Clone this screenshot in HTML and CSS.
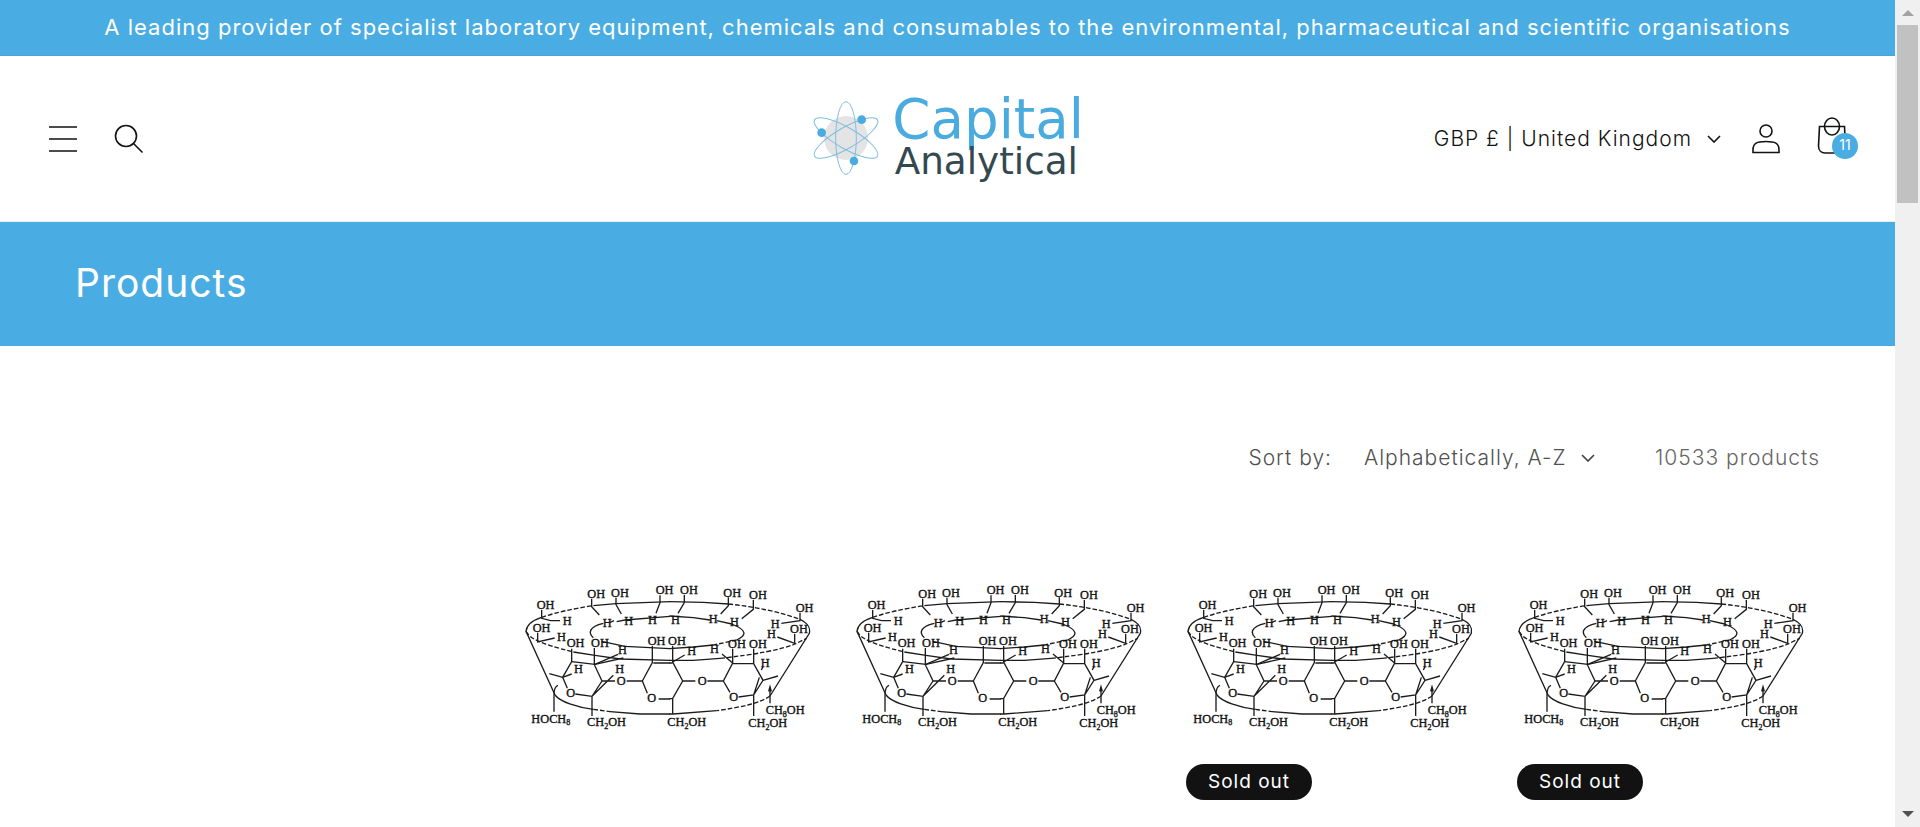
FILE: index.html
```html
<!DOCTYPE html>
<html lang="en">
<head>
<meta charset="utf-8">
<meta name="viewport" content="width=device-width, initial-scale=1">
<title>Products – Capital Analytical</title>
<link rel="stylesheet" href="styles.css">
</head>
<body>
<div class="window">
  <div class="page">
    <p class="announcement">A leading provider of specialist laboratory equipment, chemicals and consumables to the environmental, pharmaceutical and scientific organisations</p>

    <header class="header">
      <div class="header-start">
        <button class="icon-button" type="button" aria-label="Menu">
          <svg class="icon" viewBox="0 0 30 30"><path d="M1 3H29M1 15H29M1 27H29"/></svg>
        </button>
        <button class="icon-button" type="button" aria-label="Search">
          <svg class="icon" viewBox="0 0 30 30"><circle cx="12" cy="12" r="10.500"/><path d="M19.500 19.500L28.500 28.500"/></svg>
        </button>
      </div>

      <a class="logo" href="#" aria-label="Capital Analytical">
        <svg class="logo-art" viewBox="0 0 840 261">
          <circle cx="114" cy="129" r="66" fill="#e4e4e5"/>
          <g class="orbits">
            <ellipse cx="114" cy="129" rx="31" ry="109"/>
            <ellipse cx="114" cy="129" rx="31" ry="109" transform="rotate(60 114 129)"/>
            <ellipse cx="114" cy="129" rx="31" ry="109" transform="rotate(-60 114 129)"/>
          </g>
          <g fill="#4aabdf"><circle cx="41" cy="113" r="13"/><circle cx="161" cy="74" r="13"/><circle cx="138" cy="198" r="13"/></g>
          <text class="logo-name" x="253" y="128">Capital</text>
          <text class="logo-sub" x="260" y="236">Analytical</text>
        </svg>
      </a>

      <div class="header-end">
        <button class="currency" type="button">GBP £ | United Kingdom
          <svg class="chevron" viewBox="0 0 14 8"><path d="M1 1L7 7L13 1"/></svg>
        </button>
        <a class="icon-button" href="#" aria-label="Log in">
          <svg class="icon" viewBox="0 0 30 30"><circle cx="15" cy="7" r="6"/><path d="M2 28.500V26C2 19 6 17.500 15 17.500S28 19 28 26V28.500Z"/></svg>
        </a>
        <a class="icon-button cart" href="#" aria-label="Cart, 11 items">
          <svg class="icon cart-icon" viewBox="0 0 30 38"><path d="M2.500 10.500H27.500L28.500 30C28.500 34.500 25.500 37 22 37H8C4.500 37 1.500 34.500 1.500 30Z"/><ellipse cx="15" cy="10.500" rx="7.500" ry="8.500"/></svg>
          <span class="cart-count">11</span>
        </a>
      </div>
    </header>

    <div class="hero"><h1 class="hero-title">Products</h1></div>

    <main class="collection">
      <form class="toolbar">
        <label class="sort-label" for="sort">Sort by:</label>
        <span class="sort">
          <select class="sort-select" id="sort"><option>Alphabetically, A-Z</option></select>
          <svg class="chevron" viewBox="0 0 14 8"><path d="M1 1L7 7L13 1"/></svg>
        </span>
        <span class="count">10533 products</span>
      </form>

      <ul class="grid">
        <li class="card">
          <a class="card-link" href="#" aria-label="Cyclodextrin product 1">
          <svg class="molecule" viewBox="0 0 909 510">
            <defs>
            <g id="molecule">
              <g transform="translate(-42 0)">
                <g class="bonds">
                  <path d="M95 142C70 150 50 165 48 184L135 375M250 107L318 101L480 95M320 155L345 150L480 139M280 160C235 170 235 190 250 203M275 214L345 229L480 236M190 246L255 256L330 267L480 271M185 275L255 283L340 264M430 279H480"/>
                  <path d="M135 375C150 395 200 412 250 418M300 425L390 432H480"/>
                  <path class="dash" d="M95 142Q160 120 250 107M48 184C60 205 85 220 190 246M250 418L300 425"/>
                  <path d="M95 120V145L122 152H150M83 188V216L134 204M245 86V110L268 135M318 83V104L334 132M450 76V98L438 130M185 236V275L158 322L172 355M118 311L158 322L185 312M253 234V284L276 333L246 379L196 372M253 284L324 253M276 333H315M350 333H397L412 370M246 379L310 316M246 379V438M427 228V278L397 333M446 387H480M132 425V375Q132 350 144 346M300 157L312 152"/>
                </g>
                <g class="atoms">
                  <text x="80" y="117">OH</text><text x="158" y="166">H</text><text x="68" y="186">OH</text><text x="141" y="212">H</text>
                  <text x="170" y="232">OH</text><text x="232" y="83">OH</text><text x="303" y="80">OH</text><text x="278" y="171">H</text>
                  <text x="343" y="164">H</text><text x="414" y="161">H</text><text x="437" y="72">OH</text><text x="243" y="232">OH</text>
                  <text x="324" y="253">H</text><text x="192" y="310">H</text><text x="316" y="308">H</text><text x="320" y="344">O</text>
                  <text x="169" y="381">O</text><text x="413" y="224">OH</text><text x="412" y="397">O</text>
                  <text x="64" y="458">HOCH<tspan class="sub" dy="7">8</tspan></text>
                  <text x="231" y="468">CH<tspan class="sub" dy="9">2</tspan><tspan dy="-9">OH</tspan></text>
                </g>
              </g>
              <g transform="translate(408 0)">
                <g class="bonds">
                  <path d="M28 95L130 97L205 102M28 138L100 143L150 150M170 152L215 162C260 180 262 195 230 210M28 236L100 231L160 225M28 271L100 271L180 265M28 279H38M420 148C445 160 452 172 448 190L330 378M28 432H40L170 422"/>
                  <path class="dash" d="M205 102Q330 115 420 148M230 210L160 225M180 265Q340 248 405 222L440 205M330 378C300 400 240 412 170 422"/>
                  <path d="M73 75V98L54 130M205 82V107L182 132M280 90V118L245 146M420 128V152L364 160M404 192V220L352 201M38 228V276L68 333L38 385V432M38 276L74 255M68 333H106M142 333H190L218 279V236M190 333L210 367M218 279L186 252M218 281H281L309 331L281 375L236 381M281 236V281M309 331L354 318M281 375L298 322M281 375V438M304 300L309 290M330 400V350M326 364L330 350L334 364M28 386H38"/>
                </g>
                <g class="atoms">
                  <text x="60" y="72">OH</text><text x="190" y="80">OH</text><text x="267" y="87">OH</text><text x="407" y="125">OH</text>
                  <text x="33" y="161">H</text><text x="146" y="160">H</text><text x="210" y="169">H</text><text x="332" y="173">H</text>
                  <text x="321" y="205">H</text><text x="390" y="190">OH</text><text x="24" y="224">OH</text><text x="82" y="254">H</text>
                  <text x="150" y="250">H</text><text x="204" y="233">OH</text><text x="267" y="233">OH</text><text x="302" y="290">H</text>
                  <text x="113" y="344">O</text><text x="208" y="394">O</text>
                  <text x="22" y="468">CH<tspan class="sub" dy="9">2</tspan><tspan dy="-9">OH</tspan></text>
                  <text x="265" y="470">CH<tspan class="sub" dy="9">2</tspan><tspan dy="-9">OH</tspan></text>
                  <text x="317" y="433">CH<tspan class="sub" dy="7">8</tspan><tspan dy="-7">OH</tspan></text>
                </g>
              </g>
            </g>
            </defs>
            <use href="#molecule"/>
          </svg></a>
        </li>
        <li class="card">
          <a class="card-link" href="#" aria-label="Cyclodextrin product 2"><svg class="molecule" viewBox="0 0 909 510"><use href="#molecule"/></svg></a>
        </li>
        <li class="card">
          <a class="card-link" href="#" aria-label="Cyclodextrin product 3"><svg class="molecule" viewBox="0 0 909 510"><use href="#molecule"/></svg></a>
          <span class="badge">Sold out</span>
        </li>
        <li class="card">
          <a class="card-link" href="#" aria-label="Cyclodextrin product 4"><svg class="molecule" viewBox="0 0 909 510"><use href="#molecule"/></svg></a>
          <span class="badge">Sold out</span>
        </li>
      </ul>
    </main>
  </div>

  <div class="scrollbar" aria-hidden="true">
    <svg class="scroll-arrow" viewBox="0 0 12 6"><path d="M0 6L6 0L12 6Z" fill="#a3a3a3"/></svg>
    <div class="scroll-thumb"></div>
    <svg class="scroll-arrow scroll-down" viewBox="0 0 12 6"><path d="M0 0L6 6L12 0Z" fill="#505050"/></svg>
  </div>
</div>
</body>
</html>
```

FILE: styles.css
```css
* { box-sizing: border-box; }

body {
  margin: 0;
  background: #fff;
  color: #121212;
  font-family: Inter, "Open Sans", sans-serif;
  font-size: 21px;
  font-weight: 300;
  line-height: 30px;
  letter-spacing: 1px;
}

button, select { font: inherit; letter-spacing: inherit; color: inherit; background: none; border: 0; padding: 0; margin: 0; }
a { color: inherit; text-decoration: none; }
svg { display: block; }

.window { display: flex; height: 100vh; overflow: hidden; }
.page { flex: 1; min-width: 0; overflow: hidden; }

.announcement {
  margin: 0;
  padding: 12px 24px 13px;
  border-bottom: 1px solid #45a5d9;
  background: #49ade3;
  color: #fff;
  font-size: 22px;
  font-weight: 400;
  text-align: center;
}

.header {
  display: grid;
  grid-template-columns: 1fr auto 1fr;
  align-items: center;
  padding: 39px 35px;
  border-bottom: 1px solid #e8eef1;
}
.header-start { display: flex; gap: 10px; }
.header-end { display: flex; justify-content: flex-end; align-items: center; gap: 10px; }
.icon-button { display: grid; place-items: center; width: 56px; height: 56px; position: relative; }
.icon, .chevron { fill: none; stroke: #121212; stroke-width: 1.6; }
.icon { width: 30px; height: 30px; }
.cart-icon { height: 38px; margin-bottom: 8px; }
.cart-count {
  position: absolute;
  left: 28px;
  top: 22px;
  width: 26px;
  height: 26px;
  border-radius: 50%;
  background: #49ade3;
  color: #fff;
  font-size: 14px;
  font-weight: 400;
  line-height: 24px;
  text-align: center;
  letter-spacing: 0;
}
.currency { display: flex; align-items: center; gap: 15px; margin-right: 7px; }
.chevron { width: 14px; height: 8px; }

.logo-art { width: 280px; height: 87px; overflow: visible; }
.orbits { fill: none; stroke: #7fbfe0; stroke-width: 3; }
.logo-name { font: 400 164px "DejaVu Sans", sans-serif; letter-spacing: 0; fill: #4aabdf; }
.logo-sub { font: 400 112px "DejaVu Sans", sans-serif; letter-spacing: 0; fill: #34494f; }

.hero { padding: 36px 75px 38px; background: #49ade3; color: #fff; }
.hero-title { margin: 0; font-size: 39px; font-weight: 400; line-height: 50px; }

.collection { padding: 97px 75px 0; }
.toolbar { display: flex; justify-content: flex-end; align-items: center; color: #505050; }
.sort-label { margin-right: 32px; }
.sort { display: flex; align-items: center; gap: 14px; margin-right: 60px; }
.sort-select { appearance: none; height: 30px; }
.sort .chevron { stroke: #404040; }
.count { color: #666; }

.grid {
  display: grid;
  grid-template-columns: repeat(4, 1fr);
  gap: 28px;
  margin: 97px 0 0 449px;
  padding: 0;
  list-style: none;
}
.card { display: flex; flex-direction: column; align-items: flex-start; gap: 24px; }
.card-link { display: block; width: 100%; }
.molecule { width: 100%; height: auto; }
.bonds { fill: none; stroke: #1c1c1c; stroke-width: 4; }
.dash { stroke-dasharray: 14 6; }
.atoms { font: 400 37px "Liberation Serif", serif; letter-spacing: 0; fill: #111; stroke: #111; stroke-width: 1; }
.sub { font-size: 24px; }
.badge {
  padding: 4px 22px;
  border-radius: 18px;
  background: #121212;
  color: #fff;
  font-size: 19px;
  font-weight: 400;
  line-height: 28px;
}

.scrollbar { display: flex; flex-direction: column; align-items: center; width: 25px; padding: 10px 0; background: #f0f0f0; }
.scroll-arrow { width: 12px; height: 6px; }
.scroll-thumb { width: 21px; height: 178px; margin-top: 9px; background: #c1c1c1; }
.scroll-down { margin-top: auto; }
```
